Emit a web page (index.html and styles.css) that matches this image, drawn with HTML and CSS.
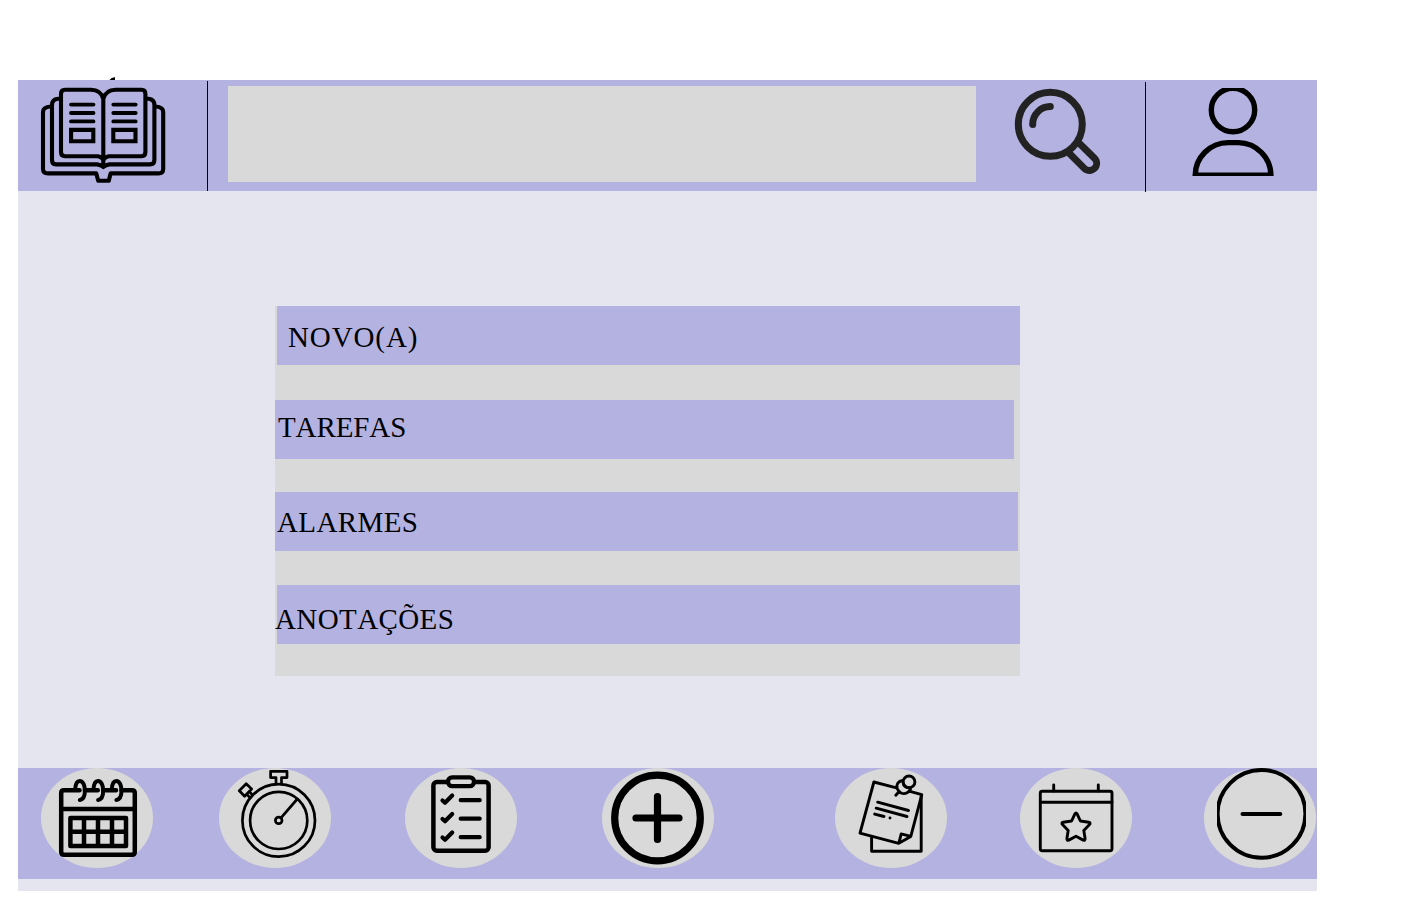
FILE: index.html
```html
<!DOCTYPE html>
<html lang="pt-BR">
<head>
<meta charset="utf-8">
<title>Agenda</title>
<link rel="stylesheet" href="styles.css">
</head>
<body>
<div class="app">
  <header class="topbar">
    <a class="logo" aria-label="Agenda">
      <svg class="icon book" viewBox="40 76 126 108" stroke-width="4.1">
        <path d="M109.500 80 Q111.500 77 115 77.300 V80Z" fill="#000" stroke="none"/>
        <path d="M103.300 166 V99 Q101 89.800 91 89.800 H65 Q61 89.800 61 94 V152 Q61 156.200 65 156.200 H98 Q102 157 103.300 160 Q105 157 108.600 156.200 H141.600 Q145.400 156.200 145.400 152 V94 Q145.400 89.800 141.600 89.800 H115.600 Q105.600 89.800 103.300 99"/>
        <path d="M60 98.800 H58 Q52 99.500 52 105 V160 Q52 164.400 56 164.400 H97 Q101 165 103.300 167 Q105.600 165 109.600 164.400 H150 Q154.400 164.400 154.400 160 V105 Q154.400 99.500 148.500 98.800 H147"/>
        <path d="M51 106.500 Q43 107 43 112 V169 Q43 173.400 48 173.400 H96.300 L98.200 180.800 H108.800 L110.600 173.400 H158.500 Q163.200 173.400 163.200 169 V112 Q163.200 107 155.500 106.500"/>
        <path d="M71 104.600H93.500M71 113H93.500M71 121.400H93.500M113.300 104.600H135.700M113.300 113H135.700M113.300 121.400H135.700" stroke-width="3.800"/>
        <path d="M71.100 129.900H93.300V141.300H71.100ZM113.300 129.900H135.500V141.300H113.300Z" stroke-linejoin="miter"/>
      </svg>
    </a>
    <div class="search-field"></div>
    <a class="search-button" aria-label="Buscar">
      <svg class="icon search" viewBox="1014 88 88 88" stroke="#222" stroke-width="7">
        <circle cx="1050.300" cy="124.300" r="32"/>
        <path d="M1032.700 124.500 A17.600 17.600 0 0 1 1050.300 106.600"/>
        <path d="M1069.500 153.500 L1084.300 168.400 A7.200 7.200 0 0 0 1094.500 158.200 L1079.500 143.500"/>
      </svg>
    </a>
    <a class="profile" aria-label="Perfil">
      <svg class="icon user" viewBox="1192 88 82 88" stroke-width="5.400">
        <circle cx="1233" cy="110" r="21.700"/>
        <path d="M1195.200 175.300 A33 33 0 0 1 1228 142.600 H1238.500 A33 33 0 0 1 1270.900 175.300 Z" stroke-linejoin="miter"/>
      </svg>
    </a>
  </header>

  <main class="content">
    <ul class="menu">
      <li class="item item-new">NOVO(A)</li>
      <li class="item item-tasks">TAREFAS</li>
      <li class="item item-alarms">ALARMES</li>
      <li class="item item-notes"><span>ANOTAÇÕES</span></li>
    </ul>
  </main>

  <nav class="toolbar">
    <a class="tool calendar" aria-label="Calendário">
      <svg class="icon" viewBox="41 768 112 100" stroke-width="4.500">
        <path d="M79.500 790.300H64Q61.200 790.300 61.200 793V852Q61.200 854.700 64 854.700H132Q134.800 854.700 134.800 852V793Q134.800 790.300 132 790.300H121.500M84.900 790.300H97.800M103.200 790.300H116M61.200 809H134.800"/>
        <path d="M70.400 817.900H126V845.900H70.400ZM84 818V846M98 818V846M112 818V846M70.400 831.800H126"/>
        <path d="M75.200 789.500C75.500 784 77.300 781 79.700 781C83 781 84.900 785.500 84.900 790.500C84.900 796.500 83 799.500 79.800 799.900M93.500 789.500C93.800 784 95.600 781 98 781C101.300 781 103.200 785.500 103.200 790.500C103.200 796.500 101.300 799.500 98.100 799.900M111.800 789.500C112.100 784 113.900 781 116.300 781C119.600 781 121.500 785.500 121.500 790.500C121.500 796.500 119.600 799.500 116.400 799.900" stroke-width="4"/>
      </svg>
    </a>
    <a class="tool timer" aria-label="Cronômetro">
      <svg class="icon" viewBox="219 768 112 100" stroke-width="2.700" stroke-linejoin="miter">
        <circle cx="278.700" cy="820.400" r="36.300"/>
        <circle cx="278.700" cy="820.400" r="28.600"/>
        <circle cx="278.700" cy="820.400" r="3.300"/>
        <path d="M281.200 817.600L297.300 799M276 784V777.600H270.600V771.300H287V777.600H281.500V784M246.200 783.800L239.300 790.800L244.600 796.200L251.600 789ZM249.800 791.800L252.600 795.300M247 794.300L250 797.800"/>
      </svg>
    </a>
    <a class="tool tasks" aria-label="Tarefas">
      <svg class="icon" viewBox="405 768 112 100" stroke-width="4.500">
        <rect x="433.400" y="782" width="55.200" height="68.700" rx="3.500"/>
        <rect x="448" y="777.300" width="26" height="8.900" rx="4.200" fill="#d9d9d9" stroke-width="4.300"/>
        <path d="M442.500 800.500L445 802.800L452.200 795.500M442.500 819L445 821.300L452.200 814M442.500 837.500L445 839.800L452.200 832.500M460.700 800.200H479.700M460.700 818.700H479.700M460.700 837.200H479.700" stroke-width="4.200"/>
      </svg>
    </a>
    <a class="tool add" aria-label="Adicionar">
      <svg class="icon" viewBox="602 768 112 100" stroke-width="7.200">
        <circle cx="657.500" cy="818" r="42.800"/>
        <path d="M636 818H679M657.500 796.500V839.500"/>
      </svg>
    </a>
    <a class="tool notes" aria-label="Anotações">
      <svg class="icon" viewBox="835 768 112 100" stroke-width="2.900" stroke-linejoin="miter">
        <path d="M871.600 837V851.300H921.200V796"/>
        <path d="M896.500 787.800L873.900 782L860 833.100L898.800 843.300L910.800 836.400L921.800 794.700L909 791.200M898.800 843.300L901.200 833.900L910.800 836.400"/>
        <path d="M877.700 802.200L908.500 810.500M876.200 808.200L907 816.500M874.700 814.100L884 816.500M890 818V818.100"/>
        <circle cx="909" cy="781.900" r="5.900"/>
        <path d="M902.700 780.500C898 781 896 784.500 897.200 788.500C898.500 792.500 903 795 907 792.800C910 791.300 910.700 789.500 910.300 787.900M903.200 782.700Q904 787.500 909 787.800M899.200 791.500L895.800 795.200"/>
      </svg>
    </a>
    <a class="tool events" aria-label="Eventos">
      <svg class="icon" viewBox="1020 768 112 100" stroke-width="2.900">
        <rect x="1040.300" y="791.300" width="71.700" height="59.400" rx="2"/>
        <path d="M1040.300 802.300H1112M1053.700 785V791M1098.300 785V791"/>
        <path d="M1074.900 813.900Q1076 812 1077.100 813.900L1080.400 821L1088.800 822.200Q1091 822.900 1089.500 824.600L1083.800 830.400L1085.100 838.600Q1085.200 840.800 1083.200 840.100L1076 836.300L1068.800 840.100Q1066.800 840.800 1066.900 838.600L1068.200 830.400L1062.500 824.600Q1061 822.900 1063.200 822.200L1071.600 821Z"/>
      </svg>
    </a>
    <a class="tool remove" aria-label="Remover">
      <svg class="icon" viewBox="1204 768 112 100" stroke-width="4">
        <clipPath id="remove-bounds"><rect x="1217" y="768" width="89" height="92"/></clipPath>
        <circle cx="1261.500" cy="813.900" r="43.900" clip-path="url(#remove-bounds)"/>
        <path d="M1242.500 814H1280.300"/>
      </svg>
    </a>
  </nav>
</div>
</body>
</html>
```

FILE: styles.css
```css
* { box-sizing: border-box; }

body {
  margin: 0;
  padding: 80px 0 0 18px;
  background: #fff;
  font-family: "Liberation Serif", serif;
  color: #000;
}

.app {
  width: 1299px;
  height: 811px;
  display: flex;
  flex-direction: column;
  background: #e5e5ef;
}

.icon {
  display: block;
  flex: none;
  fill: none;
  stroke-linecap: round;
  stroke-linejoin: round;
}

.icon:not([stroke]) { stroke: #000; }

.topbar {
  flex: none;
  height: 111px;
  display: flex;
  align-items: flex-start;
  background: #b4b2e0;
}

.logo {
  width: 190px;
  height: 110px;
  margin-top: 1px;
  padding-left: 22px;
  border-right: 1px solid #000;
}

.book { width: 126px; height: 108px; margin-top: -5px; }

.search-field {
  width: 748px;
  height: 96px;
  margin: 6px 0 0 20px;
  background: #d9d9d9;
}

.search-button { margin: 8px 0 0 38px; }
.search { width: 88px; height: 88px; }

.profile {
  height: 110px;
  margin: 2px 0 0 43px;
  padding: 6px 0 0 46px;
  border-left: 1px solid #000;
}

.user { width: 82px; height: 88px; }

.content {
  flex: none;
  height: 577px;
  padding: 115px 0 0 257px;
}

.menu {
  display: flex;
  flex-direction: column;
  width: 745px;
  height: 370px;
  margin: 0;
  padding: 0;
  list-style: none;
  background: #d9d9d9;
}

.item {
  width: 743px;
  height: 59px;
  background: #b4b2e0;
  font-size: 29px;
  line-height: 32px;
  font-kerning: none;
}

.item-new { margin-left: 2px; padding: 15px 0 0 11px; letter-spacing: 0.9px; }
.item-tasks { width: 739px; margin-top: 35px; padding: 11px 0 0 3px; letter-spacing: -0.1px; }
.item-alarms { margin-top: 33px; padding: 14px 0 0 2px; letter-spacing: 0.4px; }
.item-notes { margin: 34px 0 0 2px; padding-top: 18px; letter-spacing: 0.4px; }
.item-notes span { margin-left: -2px; }

.toolbar {
  flex: none;
  height: 111px;
  padding-left: 23px;
  display: flex;
  align-items: flex-start;
  background: #b4b2e0;
}

.tool {
  flex: none;
  width: 112px;
  height: 100px;
  border-radius: 50%;
  background: #d9d9d9;
}

.tool .icon { width: 112px; height: 100px; }

.timer { margin-left: 66px; }
.tasks { margin-left: 74px; }
.add { margin-left: 85px; }
.notes { margin-left: 121px; }
.events { margin-left: 73px; }
.remove { margin-left: 72px; }
```
